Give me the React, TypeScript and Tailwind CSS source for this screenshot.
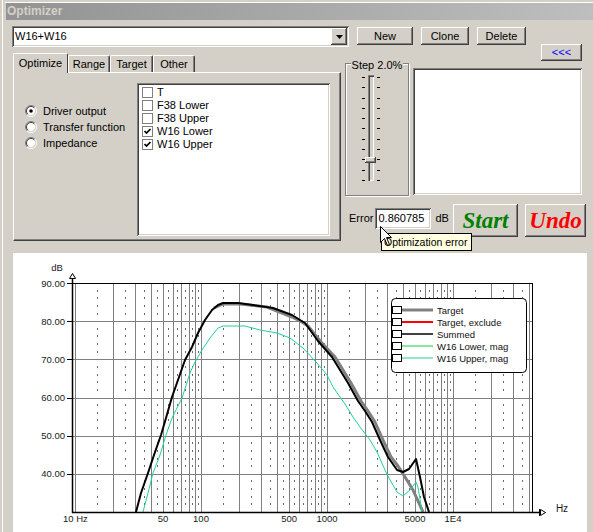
import React from "react";

const raised =
  "shadow-[inset_-1px_-1px_0_#404040,inset_1px_1px_0_#ffffff,inset_-2px_-2px_0_#808080]";
const sunken =
  "shadow-[inset_1px_1px_0_#808080,inset_-1px_-1px_0_#ffffff,inset_2px_2px_0_#404040,inset_-2px_-2px_0_#d4d0c8]";

const fx = (f: number) => 75 + 126 * Math.log10(f / 10);
const dy = (db: number) => 283 + (90 - db) * 3.8167;

const pts = (a: number[][]) => a.map((p) => p.join(",")).join(" ");

const summed = [
  [136, 512], [141, 493], [148, 473], [154, 455], [161, 435], [166, 418], [172, 397], [178, 380],
  [185, 360], [192, 347], [198, 333], [205, 320], [212, 310], [218, 305], [223, 303], [238, 303],
  [253, 305], [273, 308], [292, 315], [300, 320], [305, 323], [318, 341], [332, 357], [340, 370],
  [348, 383], [353, 392], [358, 401], [365, 411], [372, 422], [380, 440], [388, 457], [397, 470],
  [403, 472], [409, 469], [416, 459], [420, 477], [424, 497], [429, 512],
];
const target = [
  [214, 308], [223, 304], [240, 304], [267, 307], [292, 317], [302, 322], [308, 326], [321, 342],
  [335, 357], [343, 370], [351, 383], [356, 392], [361, 401], [368, 411], [375, 422], [383, 440],
  [391, 457], [398, 466], [405, 477], [413, 490], [423, 512],
];
const upper = [
  [143, 512], [148, 493], [153, 473], [160, 455], [166, 435], [172, 418], [182, 398], [190, 373],
  [195, 362], [202, 350], [210, 338], [218, 328], [223, 326], [245, 326], [260, 330], [277, 333],
  [290, 338], [303, 348], [317, 363], [327, 375], [333, 387], [340, 397], [345, 404], [353, 417],
  [360, 427], [370, 440], [377, 452], [385, 470], [390, 480], [397, 492], [403, 496], [410, 490],
  [416, 482], [418, 487], [422, 512],
];

const legend: [string, string, number][] = [
  ["Target", "#808080", 3],
  ["Target, exclude", "#ff0000", 2],
  ["Summed", "#000000", 1.5],
  ["W16 Lower, mag", "#10d040", 1],
  ["W16 Upper, mag", "#20d0a0", 1],
];

function Chart() {
  const major: number[] = [];
  const minor: number[] = [];
  [10, 100, 1000, 10000].forEach((d) => {
    for (let m = 1; m <= 9; m++) {
      if (fx(d * m) < 532) major.push(fx(d * m));
      if (fx(d * (m + 0.5)) < 531) minor.push(fx(d * (m + 0.5)));
    }
  });
  const rows: number[] = [];
  for (let db = 32; db <= 88; db += 2) if (db % 10 !== 0) rows.push(dy(db));

  return (
    <svg width={574} height={279} viewBox="13 253 574 279" className="block">
      <rect x={13} y={253} width={574} height={279} fill="#ffffff" />
      {rows.map((y, i) =>
        minor.map((x, j) => <rect key={`${i}-${j}`} x={Math.round(x)} y={Math.round(y) - 1} width={1} height={2} fill="#6a6a6a" />)
      )}
      {major.map((x, i) => (
        <line key={i} x1={Math.round(x) + 0.5} x2={Math.round(x) + 0.5} y1={283} y2={512} stroke="#808080" strokeWidth={1} />
      ))}
      {[80, 70, 60, 50, 40].map((db) => (
        <line key={db} x1={72} x2={532} y1={Math.round(dy(db)) + 0.5} y2={Math.round(dy(db)) + 0.5} stroke="#808080" strokeWidth={1} />
      ))}
      {[90, 80, 70, 60, 50, 40].map((db) => (
        <g key={db}>
          <line x1={67} x2={72} y1={Math.round(dy(db)) + 0.5} y2={Math.round(dy(db)) + 0.5} stroke="#000" />
          <text x={65} y={dy(db) + 3.5} fontSize={9.5} textAnchor="end" fill="#1a1a1a">
            {db.toFixed(2)}
          </text>
        </g>
      ))}
      <polyline points={pts(target)} fill="none" stroke="#808080" strokeWidth={3} strokeLinejoin="round" />
      <polyline points={pts(upper)} fill="none" stroke="#20d0a0" strokeWidth={1} strokeLinejoin="round" />
      <polyline points={pts(summed)} fill="none" stroke="#000000" strokeWidth={2} strokeLinejoin="round" />
      {/* frame and axes */}
      <line x1={72} x2={532} y1={283.5} y2={283.5} stroke="#000" />
      <line x1={532.5} x2={532.5} y1={283} y2={512} stroke="#000" />
      <line x1={72.5} x2={72.5} y1={276} y2={513} stroke="#000" strokeWidth={1.5} />
      <line x1={72} x2={542} y1={512.5} y2={512.5} stroke="#000" strokeWidth={1.5} />
      <path d="M69.5 278.5 L72.5 273.5 L75.5 278.5 Z" fill="#fff" stroke="#000" />
      <path d="M540.5 509.5 L545.5 512.5 L540.5 515.5 Z" fill="#fff" stroke="#000" />
      <line x1={539.5} x2={539.5} y1={509} y2={516} stroke="#000" />
      <text x={57} y={271} fontSize={9.5} textAnchor="middle" fill="#1a1a1a">dB</text>
      <text x={562} y={512} fontSize={10} textAnchor="middle" fill="#1a1a1a">Hz</text>
      <text x={63} y={522} fontSize={9.5} fill="#1a1a1a">10 Hz</text>
      {[
        ["50", 50],
        ["100", 100],
        ["500", 500],
        ["1000", 1000],
        ["5000", 5000],
        ["1E4", 10000],
      ].map(([l, f]) => (
        <text key={l} x={fx(f as number)} y={522} fontSize={9.5} textAnchor="middle" fill="#1a1a1a">
          {l}
        </text>
      ))}
      {/* legend */}
      <rect x={391.5} y={298.5} width={135} height={74} rx={4} fill="#fff" stroke="#000" />
      {legend.map(([label, color, w], i) => {
        const y = 310 + i * 12;
        return (
          <g key={label}>
            <line x1={402} x2={433} y1={y} y2={y} stroke={color} strokeWidth={w} />
            <rect x={392.5} y={y - 3.5} width={9} height={7} fill="#fff" stroke="#000" />
            <text x={437} y={y + 3.5} fontSize={9.5} fill="#111">{label}</text>
          </g>
        );
      })}
    </svg>
  );
}

function Radio({ on, label }: { on?: boolean; label: string }) {
  return (
    <div className="flex h-[16px] items-center gap-[6px]">
      <svg width={12} height={12} viewBox="0 0 12 12">
        <circle cx={6} cy={6} r={4.5} fill="#fff" />
        <path d="M2.1 9.9 A5.5 5.5 0 0 1 9.9 2.1" fill="none" stroke="#808080" />
        <path d="M9.9 2.1 A5.5 5.5 0 0 1 2.1 9.9" fill="none" stroke="#ffffff" />
        <path d="M2.8 9.2 A4.5 4.5 0 0 1 9.2 2.8" fill="none" stroke="#404040" />
        <path d="M9.2 2.8 A4.5 4.5 0 0 1 2.8 9.2" fill="none" stroke="#d4d0c8" />
        {on && <circle cx={6} cy={6} r={1.8} fill="#000" />}
      </svg>
      <span>{label}</span>
    </div>
  );
}

function CheckRow({ on, label }: { on?: boolean; label: string }) {
  return (
    <div className="flex h-[13px] items-center gap-[4px] pl-[3px]">
      <div className="flex h-[11px] w-[11px] items-center justify-center border border-[#808080] bg-white">
        {on && (
          <svg width={9} height={9} viewBox="0 0 9 9">
            <path d="M1.5 4 L3.5 6 L7.5 2" fill="none" stroke="#000" strokeWidth={1.7} />
          </svg>
        )}
      </div>
      <span>{label}</span>
    </div>
  );
}

function Button({ children, className = "" }: { children: React.ReactNode; className?: string }) {
  return (
    <div className={`flex items-center justify-center bg-[#d4d0c8] ${raised} ${className}`}>{children}</div>
  );
}

export default function App() {
  return (
    <div className="relative flex h-[532px] w-[593px] overflow-hidden bg-[#d4d0c8] font-['Liberation_Sans',Arial,sans-serif] text-[11px] leading-[13px] text-black">
      {/* parent window edge */}
      <div className="flex w-[5px] shrink-0">
        <div className="w-[2px]" />
        <div className="w-px bg-white" />
      </div>

      {/* Optimizer window */}
      <div className="mt-[2px] flex flex-1 flex-col border-t border-white pl-px">
        <div className="flex h-[17px] items-center bg-gradient-to-r from-[#939393] to-[#bebebe] pl-[1px] text-[12px] font-bold text-[#d4d0c8]">
          Optimizer
        </div>

        {/* combo + buttons */}
        <div className="mt-[6px] flex items-start">
          <div className={`ml-[6px] flex h-[21px] w-[337px] items-center bg-white p-[2px] ${sunken}`}>
            <span className="flex-1 pl-[1px]">W16+W16</span>
            <div className={`flex h-[17px] w-[16px] items-center justify-center bg-[#d4d0c8] ${raised}`}>
              <svg width={7} height={4} viewBox="0 0 7 4">
                <path d="M0 0 H7 L3.5 4 Z" fill="#000" />
              </svg>
            </div>
          </div>
          <Button className="ml-[8px] mt-px h-[18px] w-[56px]">New</Button>
          <Button className="ml-[8px] mt-px h-[18px] w-[48px]">Clone</Button>
          <Button className="ml-[8px] mt-px h-[18px] w-[49px]">Delete</Button>
        </div>

        {/* tabs + right side */}
        <div className="-mt-[3px] flex items-start">
          <div className="ml-[7px] mt-[9px] flex w-[328px] flex-col">
            <div className="flex h-[19px] items-end">
              <div className="relative z-10 -mb-px flex h-[20px] w-[55px] items-center justify-center rounded-t-[2px] border-l border-t border-r border-white border-r-[#404040] bg-[#d4d0c8]">
                Optimize
              </div>
              {[
                ["Range", "w-[42px]"],
                ["Target", "w-[43px]"],
                ["Other", "w-[42px]"],
              ].map(([t, w]) => (
                <div
                  key={t}
                  className={`flex h-[17px] ${w} items-center justify-center rounded-t-[2px] border-l border-t border-r border-white border-r-[#404040] shadow-[inset_-1px_0_0_#808080]`}
                >
                  {t}
                </div>
              ))}
            </div>
            <div className="flex h-[169px] border border-[#404040] border-l-white border-t-white pt-[10px] shadow-[inset_-1px_-1px_0_#808080]">
              <div className="ml-[11px] mt-[20px] flex flex-col">
                <Radio on label="Driver output" />
                <Radio label="Transfer function" />
                <Radio label="Impedance" />
              </div>
              <div className={`ml-auto mr-[10px] h-[153px] w-[193px] bg-white px-[2px] pt-[3px] ${sunken}`}>
                <CheckRow label="T" />
                <CheckRow label="F38 Lower" />
                <CheckRow label="F38 Upper" />
                <CheckRow on label="W16 Lower" />
                <CheckRow on label="W16 Upper" />
              </div>
            </div>
          </div>

          <div className="ml-[4px] flex w-[242px] flex-col">
            <div className="flex h-[17px] justify-end pr-[5px]">
              <Button className="h-[17px] w-[41px] text-[#0000ff]">&lt;&lt;&lt;</Button>
            </div>
            <div className="mt-[2px] flex items-start">
              <div className="flex h-[133px] w-[64px] flex-col border border-[#808080] shadow-[inset_1px_1px_0_#ffffff,1px_1px_0_#ffffff]">
                <div className="mx-auto -mt-[5px] w-fit bg-[#d4d0c8] px-px leading-[12px]">Step 2.0%</div>
                <div className="mt-[4px] flex h-[106px]">
                  <div className="ml-[16px] flex w-[3px] flex-col justify-between pt-[2px]">
                    {Array.from({ length: 11 }).map((_, i) => (
                      <div key={i} className="h-px w-[3px] bg-black" />
                    ))}
                  </div>
                  <div className="relative ml-[3px] w-[6px] bg-[#d4d0c8] shadow-[inset_1px_1px_0_#808080,inset_2px_2px_0_#404040,inset_-1px_-1px_0_#ffffff]">
                    <div className={`absolute left-[-3px] top-[82px] h-[6px] w-[11px] bg-[#d4d0c8] ${raised}`} />
                  </div>
                  <div className="ml-[3px] flex w-[3px] flex-col justify-between pt-[2px]">
                    {Array.from({ length: 11 }).map((_, i) => (
                      <div key={i} className="h-px w-[3px] bg-black" />
                    ))}
                  </div>
                </div>
              </div>
              <div className={`ml-[4px] mt-[5px] h-[127px] w-[169px] bg-white ${sunken}`} />
            </div>
            <div className="mt-[8px] flex h-[33px] items-center">
              <span className="mb-[4px] ml-[4px]">Error</span>
              <div className={`mb-[4px] ml-[2px] flex h-[21px] w-[56px] items-center bg-white pl-[3px] ${sunken}`}>
                0.860785
              </div>
              <span className="mb-[4px] ml-[4px]">dB</span>
              <Button className="ml-auto h-[33px] w-[65px] font-['Liberation_Serif',serif] text-[23px] font-bold italic text-[#008000]">
                Start
              </Button>
              <Button className="ml-[7px] mr-px h-[33px] w-[61px] font-['Liberation_Serif',serif] text-[23px] font-bold italic text-[#ff0000]">
                Undo
              </Button>
            </div>
          </div>
        </div>

        {/* chart */}
        <div className="ml-[7px] mt-[12px] w-[574px] flex-1 overflow-hidden bg-white">
          <Chart />
        </div>
      </div>

      {/* tooltip + cursor */}
      <div className="absolute left-[381px] top-[233px] flex h-[18px] w-[91px] items-center border border-black bg-[#ffffe1] pl-[2px] text-[10.5px]">
        Optimization error
      </div>
      <svg className="absolute left-[380px] top-[226px]" width={13} height={21} viewBox="0 0 13 21">
        <path d="M0.5 0.5 L0.5 16.5 L4.5 12.5 L7.5 19.5 L9.5 18.5 L6.5 11.5 L11.5 11.5 Z" fill="#fff" stroke="#000" />
      </svg>
    </div>
  );
}
